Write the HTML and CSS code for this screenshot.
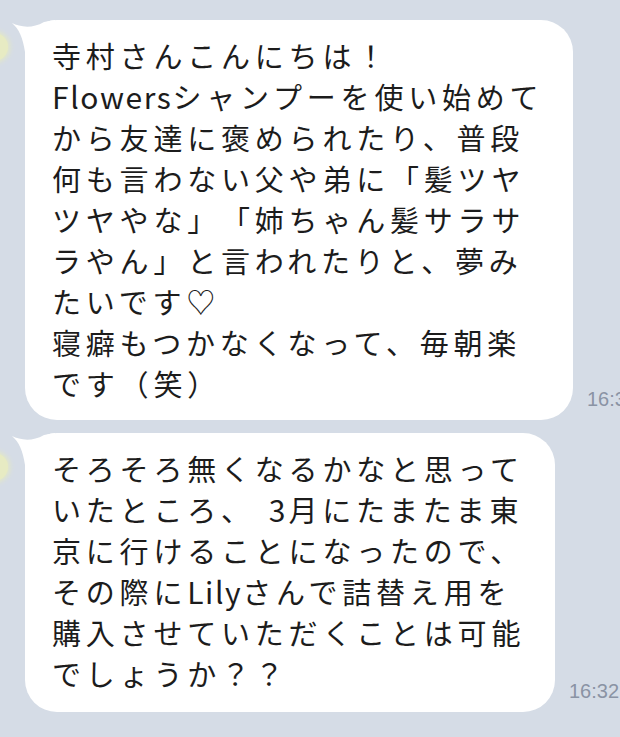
FILE: index.html
```html
<!DOCTYPE html>
<html lang="ja">
<head>
<meta charset="utf-8">
<title>LINE chat</title>
<link rel="stylesheet" href="styles.css">
</head>
<body>
<main class="chat">
  <div class="row">
    <div class="avatar avatar--first"></div>
    <div class="bubble bubble--first">
      <svg class="tail" viewBox="0 0 45 45" width="45" height="45" aria-hidden="true"><path d="M2 3 C10 7 22 9 34 2 L45 0 L45 45 L15 45 L15 32 C13 18 9 9 2 3 Z" fill="#ffffff"/></svg>
      <p class="text">寺村さんこんにちは！<br><span class="latin">Flowers</span>シャンプーを使い始めて<br>から友達に褒められたり、普段<br>何も言わない父や弟に「髪ツヤ<br>ツヤやな」「姉ちゃん髪サラサ<br>ラやん」と言われたりと、夢み<br>たいです♡<br>寝癖もつかなくなって、毎朝楽<br>です（笑）</p>
    </div>
    <span class="time">16:32</span>
  </div>
  <div class="row">
    <div class="avatar avatar--second"></div>
    <div class="bubble bubble--second">
      <svg class="tail" viewBox="0 0 45 45" width="45" height="45" aria-hidden="true"><path d="M2 3 C10 7 22 9 34 2 L45 0 L45 45 L15 45 L15 32 C13 18 9 9 2 3 Z" fill="#ffffff"/></svg>
      <p class="text">そろそろ無くなるかなと思って<br>いたところ、<span class="digit">3</span>月にたまたま東<br>京に行けることになったので、<br>その際に<span class="latin">Lily</span>さんで詰替え用を<br>購入させていただくことは可能<br>でしょうか？？</p>
    </div>
    <span class="time">16:32</span>
  </div>
</main>
</body>
</html>
```
FILE: styles.css
```css
* { box-sizing: border-box; }
html, body {
  margin: 0;
  padding: 0;
  background: #d5dce6;
  width: 620px;
  height: 737px;
  overflow: hidden;
}
.chat {
  display: flex;
  flex-direction: column;
  gap: 13px;
  padding-top: 20px;
}
.row {
  display: flex;
  align-items: flex-end;
  width: 700px;
}
.avatar {
  flex: 0 0 28px;
  height: 28px;
  margin-left: -20px;
  margin-right: 17px;
  border-radius: 50%;
  background: #e7ebc3;
  box-shadow: 0 0 5px 2px #e3e8c6;
  align-self: flex-start;
}
.avatar--first { margin-top: 13px; }
.avatar--second { margin-top: 20px; }
.bubble {
  position: relative;
  flex: 0 0 auto;
  background: #ffffff;
  border-radius: 32px;
  padding: 15px 20px 16px 27px;
}
.bubble--first { width: 548px; }
.bubble--second { width: 530px; padding-bottom: 18px; }
.tail {
  position: absolute;
  left: -15px;
  top: 0;
  display: block;
}
.text {
  position: relative;
  margin: 0;
  font-family: "Noto Sans CJK JP", "Noto Sans", sans-serif;
  font-size: 29px;
  letter-spacing: 4.8px;
  line-height: 41px;
  color: #1c1c1c;
  white-space: nowrap;
  text-spacing-trim: space-all;
}
.latin {
  font-size: 30px;
  letter-spacing: 1.6px;
}
.digit {
  font-size: 30px;
  letter-spacing: 3px;
  margin-left: 14px;
}
.time {
  flex: 0 0 auto;
  margin-left: 14px;
  margin-bottom: 11px;
  font-family: "Liberation Sans", Arial, sans-serif;
  font-size: 20px;
  line-height: 20px;
  color: #8a93a4;
}
```
